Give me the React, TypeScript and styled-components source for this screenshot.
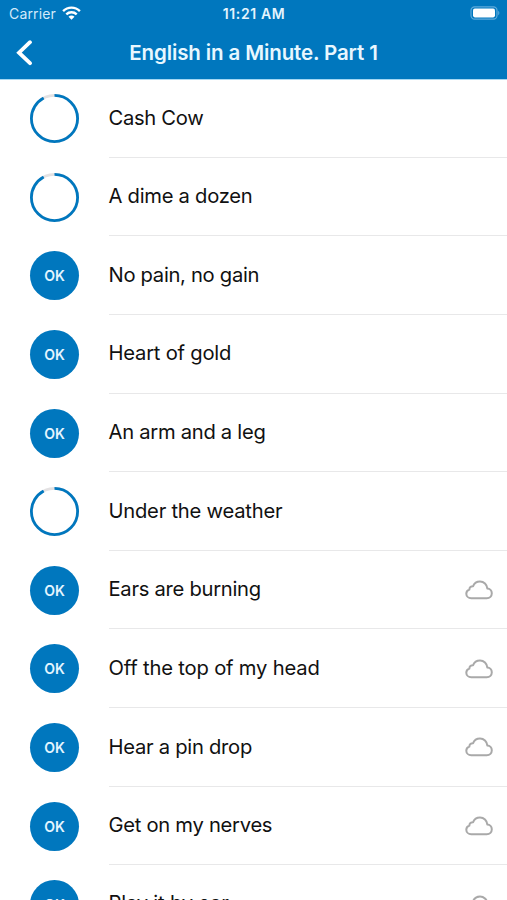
import React from "react";
import styled, { createGlobalStyle } from "styled-components";

const BLUE = "#0077be";

const GlobalStyle = createGlobalStyle`
  * { box-sizing: border-box; }
  html, body { margin: 0; background: #fff; }
  body { overflow: hidden; }
`;

const Screen = styled.main`
  width: 507px;
  height: 900px;
  overflow: hidden;
  display: flex;
  flex-direction: column;
  background: #fff;
  color: #111;
  font-family: Inter, "Liberation Sans", sans-serif;
`;

const Header = styled.header`
  height: 79px;
  flex: none;
  background: ${BLUE};
  box-shadow: 0 1px 0 #a5d8f3;
  color: #fff;
`;

const StatusBar = styled.div`
  height: 27px;
  display: grid;
  grid-template-columns: 1fr auto 1fr;
  align-items: center;
  padding: 0 7px 0 9px;
`;

const Carrier = styled.div`
  display: flex;
  align-items: center;
  gap: 6px;
  font-size: 14px;
  letter-spacing: 0.15px;
  line-height: 27px;
  color: #d3eafa;
`;

const WifiIcon = styled.svg`
  margin-bottom: 2px;
`;

const Clock = styled.time`
  font-size: 14px;
  font-weight: 600;
  letter-spacing: 0.6px;
  line-height: 27px;
  margin-right: 1px;
  color: #e4f4fd;
`;

const Battery = styled.svg`
  justify-self: end;
  margin-bottom: 1px;
`;

const NavBar = styled.div`
  height: 52px;
  display: grid;
  grid-template-columns: 60px 1fr 60px;
  align-items: center;
`;

const BackButton = styled.button`
  width: 60px;
  height: 50px;
  padding: 0 0 0 15px;
  border: 0;
  background: none;
  color: #fff;
  display: flex;
  align-items: center;
`;

const Title = styled.h1`
  margin: 0;
  text-align: center;
  white-space: nowrap;
  font-size: 20.5px;
  font-weight: 600;
  letter-spacing: -0.12px;
  line-height: 50px;
  color: #e8f7ff;
`;

const List = styled.ul`
  list-style: none;
  margin: 0;
  padding: 0;
`;

const Phrase = styled.span<{ $tracking: number }>`
  font-size: 20.2px;
  line-height: 26px;
  padding-bottom: 0.6px;
  white-space: nowrap;
  letter-spacing: ${(p) => p.$tracking}px;
`;

const Row = styled.li`
  height: 78.65px;
  display: grid;
  grid-template-columns: 108.5px 1fr;

  &:last-child ${Phrase} {
    padding-bottom: 2.8px;
  }
`;

const StatusCell = styled.div`
  padding: 15px 0 0 30px;
`;

const OkBadge = styled.span`
  display: flex;
  align-items: center;
  justify-content: center;
  width: 49px;
  height: 49px;
  border-radius: 50%;
  background: ${BLUE};
  color: #e4f5ff;
  font-size: 14px;
  font-weight: 600;
`;

const Ring = styled.svg`
  display: block;
`;

const Content = styled.div`
  display: flex;
  align-items: center;
  justify-content: space-between;
  border-bottom: 1px solid #e8e8e9;
  padding-right: 14px;
`;

const CloudIcon = styled.svg`
  flex: none;
  margin-top: 1px;
`;

type Lesson = { name: string; done?: boolean; cloud?: boolean; tracking: number };

const lessons: Lesson[] = [
  { name: "Cash Cow", tracking: -0.3 },
  { name: "A dime a dozen", tracking: -0.27 },
  { name: "No pain, no gain", done: true, tracking: -0.3 },
  { name: "Heart of gold", done: true, tracking: -0.22 },
  { name: "An arm and a leg", done: true, tracking: -0.28 },
  { name: "Under the weather", tracking: -0.23 },
  { name: "Ears are burning", done: true, cloud: true, tracking: -0.28 },
  { name: "Off the top of my head", done: true, cloud: true, tracking: -0.18 },
  { name: "Hear a pin drop", done: true, cloud: true, tracking: -0.27 },
  { name: "Get on my nerves", done: true, cloud: true, tracking: -0.28 },
  { name: "Play it by ear", done: true, cloud: true, tracking: -0.2 },
];

const ProgressRing = () => (
  <Ring width="49" height="49" viewBox="0 0 49 49" fill="none" strokeWidth="2.8">
    <circle cx="24.5" cy="24.5" r="23.1" stroke="#e3e1e2" />
    <circle
      cx="24.5"
      cy="24.5"
      r="23.1"
      stroke={BLUE}
      pathLength="100"
      strokeDasharray="92.2 7.8"
      transform="rotate(-90 24.5 24.5)"
    />
  </Ring>
);

const Cloud = () => (
  <CloudIcon width="28" height="20" viewBox="0 0 28 20" fill="none" stroke="#a9a9a9" strokeWidth="2" strokeLinejoin="round">
    <path d="M6.2 18.2H21.8C24.8 18.2 26.8 16 26.8 13.3C26.8 10.6 24.8 8.6 22.3 8.4C22 4.5 18.9 1.4 15 1.4C11.8 1.4 9.2 3.2 8.1 6.2C5.9 6.1 4.3 7.5 4.4 9.6C2.5 10.2 1.3 11.8 1.3 13.7C1.3 16.2 3.4 18.2 6.2 18.2Z" />
  </CloudIcon>
);

export default function App() {
  return (
    <>
      <GlobalStyle />
      <Screen>
        <Header>
          <StatusBar>
            <Carrier>
              Carrier
              <WifiIcon width="19" height="14" viewBox="0 0 19 14" fill="none" stroke="#fff" strokeWidth="2.4">
                <path d="M1.1 5.1C5.8 .4 13.2 .4 17.9 5.1" />
                <path d="M4.3 8.3C7.2 5.5 11.8 5.5 14.7 8.3" />
                <path d="M9.5 13.7L6.5 10.7C8.2 9.2 10.8 9.2 12.5 10.7Z" fill="#fff" stroke="none" />
              </WifiIcon>
            </Carrier>
            <Clock>11:21 AM</Clock>
            <Battery width="30" height="14" viewBox="0 0 30 14">
              <rect x="1" y="0.8" width="26" height="12.4" rx="3.6" fill="none" stroke="#5eabdb" strokeWidth="1.2" />
              <rect x="3" y="2.6" width="22" height="8.8" rx="1.8" fill="#fff" />
              <path d="M28.2 4.8C29.8 5.5 29.8 8.5 28.2 9.2Z" fill="#5eabdb" />
            </Battery>
          </StatusBar>
          <NavBar>
            <BackButton aria-label="Back">
              <svg width="18" height="26" viewBox="0 0 18 26" fill="none" stroke="currentColor" strokeWidth="3.8" strokeLinecap="round" strokeLinejoin="miter">
                <path d="M15 2.2L4 12.7L15 23.2" />
              </svg>
            </BackButton>
            <Title>English in a Minute. Part 1</Title>
          </NavBar>
        </Header>
        <List>
          {lessons.map((l) => (
            <Row key={l.name}>
              <StatusCell>{l.done ? <OkBadge>OK</OkBadge> : <ProgressRing />}</StatusCell>
              <Content>
                <Phrase $tracking={l.tracking}>{l.name}</Phrase>
                {l.cloud && <Cloud />}
              </Content>
            </Row>
          ))}
        </List>
      </Screen>
    </>
  );
}
